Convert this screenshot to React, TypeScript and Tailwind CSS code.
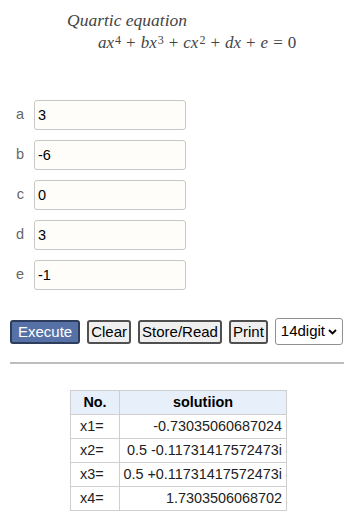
import React, { useState } from 'react'

const coefs = [
    { name: 'a', value: '3' },
    { name: 'b', value: '-6' },
    { name: 'c', value: '0' },
    { name: 'd', value: '3' },
    { name: 'e', value: '-1' },
]

const roots = [
    { no: 'x1=', val: '-0.73035060687024' },
    { no: 'x2=', val: '0.5 -0.11731417572473i' },
    { no: 'x3=', val: '0.5 +0.11731417572473i' },
    { no: 'x4=', val: '1.7303506068702' },
]

function V({ children }: { children: React.ReactNode }) {
    return <span className="italic">{children}</span>
}

function Sup({ children }: { children: React.ReactNode }) {
    return <sup className="text-[12px] not-italic relative -top-[4px] ml-[1px]">{children}</sup>
}

function Op({ children }: { children: React.ReactNode }) {
    return <span className="mx-[5px]">{children}</span>
}

export default function App() {
    const [vals, setVals] = useState(coefs.map((c) => c.value))

    return (
        <div className="w-[363px] h-[525px] bg-white text-[14.5px] text-black overflow-hidden" style={{ fontFamily: '"Liberation Sans", Arial, sans-serif' }}>
            {/* title + formula */}
            <div className="pl-[67px] pt-[10px] text-[#444]" style={{ fontFamily: '"Liberation Serif", "DejaVu Serif", serif' }}>
                <div className="italic text-[17.5px] leading-[21px]">Quartic equation</div>
                <div className="pl-[31px] text-[17px] leading-[20px] mt-[2px] whitespace-nowrap">
                    <V>ax</V><Sup>4</Sup><Op>+</Op><V>bx</V><Sup>3</Sup><Op>+</Op><V>cx</V><Sup>2</Sup><Op>+</Op><V>dx</V><Op>+</Op><V>e</V><Op>=</Op>0
                </div>
            </div>

            {/* inputs */}
            <div className="flex flex-col gap-[10px] mt-[47px]">
                {coefs.map((c, i) => (
                    <div key={c.name} className="flex items-center">
                        <span className="w-[34px] pr-[10px] text-right text-[#666]">{c.name}</span>
                        <input
                            className="w-[152px] h-[30px] border border-[#c8c8c8] rounded-[3px] bg-[#fffdfa] px-[3px] outline-none"
                            value={vals[i]}
                            onChange={(e) => {
                                const n = [...vals]
                                n[i] = e.target.value
                                setVals(n)
                            }}
                        />
                    </div>
                ))}
            </div>

            {/* buttons */}
            <div className="flex items-center gap-[7px] pl-[10px] mt-[28px] text-[15px]">
                <button className="h-[24px] px-[6px] bg-[#5671a6] text-white border-2 border-[#2f3d5c] rounded-[3px] leading-none">Execute</button>
                <button className="h-[24px] px-[2px] bg-[#efefef] border-2 border-[#505050] rounded-[3px] leading-none">Clear</button>
                <button className="h-[24px] px-[2px] bg-[#efefef] border-2 border-[#505050] rounded-[3px] leading-none">Store/Read</button>
                <button className="h-[24px] px-[2px] bg-[#efefef] border-2 border-[#505050] rounded-[3px] leading-none">Print</button>
                <div className="h-[27px] w-[68px] border border-[#909090] rounded-[3px] bg-white flex items-center pl-[5px] gap-[3px]">
                    <span>14digit</span>
                    <svg width="9" height="6" viewBox="0 0 9 6" className="mt-[1px]">
                        <path d="M1 1 L4.5 4.5 L8 1" fill="none" stroke="#000" strokeWidth="1.8" />
                    </svg>
                </div>
            </div>

            <hr className="mx-[10px] w-[334px] mt-[17px] border-0 border-t-2 border-[#bdbdbd]" />

            {/* results */}
            <table className="ml-[70px] mt-[26px] border-collapse text-[14.4px]">
                <thead>
                    <tr className="bg-[#e6effa] h-[24px]">
                        <th className="w-[49px] border border-[#cfcfcf] font-bold">No.</th>
                        <th className="w-[167px] border border-[#cfcfcf] font-bold">solutiion</th>
                    </tr>
                </thead>
                <tbody>
                    {roots.map((r) => (
                        <tr key={r.no} className="h-[24px]">
                            <td className="border border-[#cfcfcf] pl-[9px] text-[#222]">{r.no}</td>
                            <td className="border border-[#cfcfcf] pr-[4px] text-right text-[#222] whitespace-nowrap">{r.val}</td>
                        </tr>
                    ))}
                </tbody>
            </table>
        </div>
    )
}
